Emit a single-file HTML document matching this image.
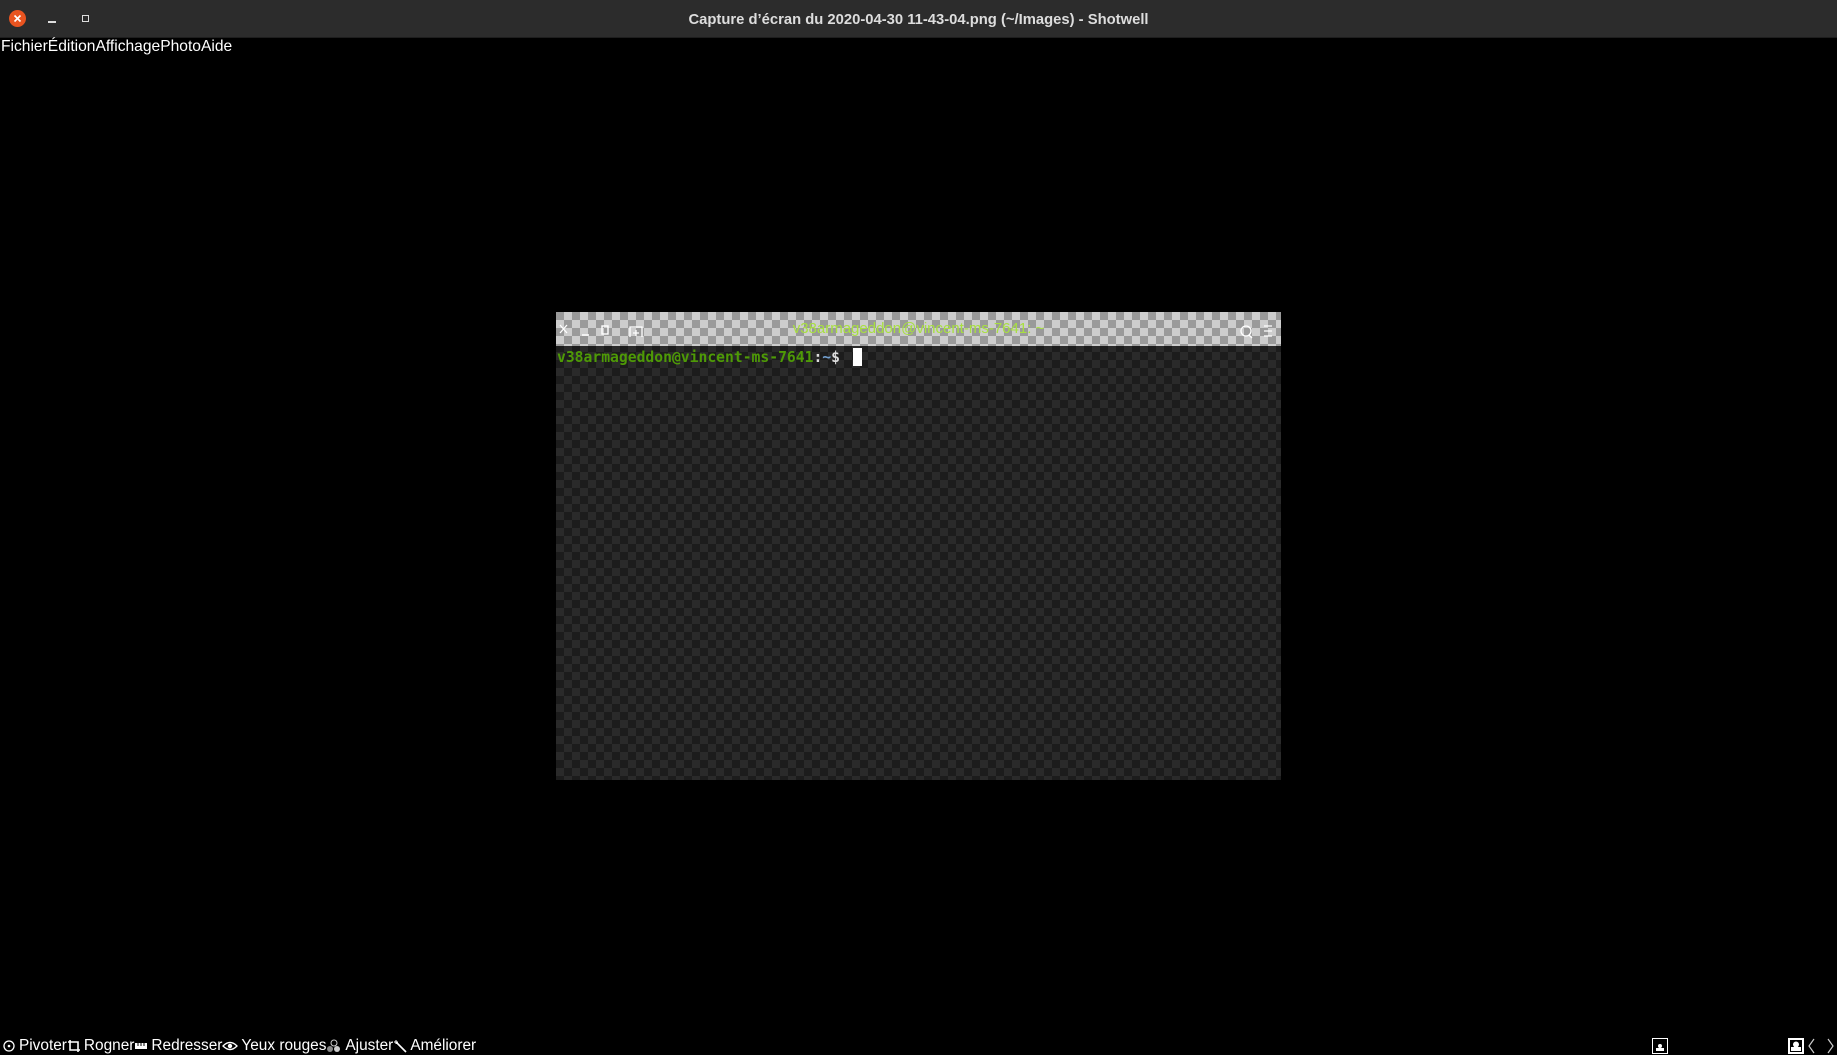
<!DOCTYPE html>
<html><head><meta charset="utf-8"><style>
html,body{margin:0;padding:0;width:1837px;height:1055px;background:#000;overflow:hidden;font-family:"Liberation Sans",sans-serif;}
.tb{position:absolute;left:0;top:0;width:1837px;height:37px;background:#2c2c2c;border-bottom:1px solid #1e1e1e}
.close{position:absolute;left:9px;top:10px;width:17px;height:17px;border-radius:50%;background:#e95420}
.title{position:absolute;left:0;right:0;top:12px;text-align:center;color:#ddd;font-weight:bold;font-size:14.8px}
.menu{position:absolute;left:1px;top:38px;color:#fff;font-size:15.6px}
.term{position:absolute;left:556px;top:312px;width:725px;height:468px;
background-color:#1c1c1c;background-image:
linear-gradient(45deg,#2a2a2a 25%,transparent 25%,transparent 75%,#2a2a2a 75%),
linear-gradient(45deg,#2a2a2a 25%,transparent 25%,transparent 75%,#2a2a2a 75%);
background-size:16px 16px;background-position:0 0,8px 8px}
.th{position:absolute;left:0;top:0;width:725px;height:34px;background-color:#9a9a9a;background-image:
linear-gradient(45deg,#cdcdcd 25%,transparent 25%,transparent 75%,#cdcdcd 75%),
linear-gradient(45deg,#cdcdcd 25%,transparent 25%,transparent 75%,#cdcdcd 75%);
background-size:16px 16px;background-position:0 0,8px 8px}
.tt{position:absolute;left:0;right:0;top:8px;text-align:center;color:#a8e040;font-family:"Liberation Sans",sans-serif;font-size:15px}
.pr{position:absolute;left:1px;top:36px;font-family:"DejaVu Sans Mono","Liberation Mono",monospace;font-weight:bold;font-size:14.7px;color:#4e9a06;white-space:pre}
.cur{display:inline-block;width:9px;height:18px;background:#fff;vertical-align:-4px;margin-left:4px}
.bot{position:absolute;left:2px;top:1037px;color:#fff;font-size:15.4px;white-space:pre;display:flex;align-items:center}
.bot svg{margin-right:3px}
</style></head><body>
<div class="tb">
<div class="close"><svg width="17" height="17"><path d="M5.5 5.5L11.5 11.5M11.5 5.5L5.5 11.5" stroke="#fff" stroke-width="1.6"/></svg></div>
<div style="position:absolute;left:48px;top:21px;width:8px;height:1.5px;background:#ddd"></div>
<div style="position:absolute;left:82px;top:15px;width:5px;height:5px;border:1.3px solid #ddd"></div>
<div class="title">Capture d’écran du 2020-04-30 11-43-04.png (~/Images) - Shotwell</div>
</div>
<div class="menu">FichierÉditionAffichagePhotoAide</div>
<div class="term">
<div class="th">
<svg width="725" height="34" style="position:absolute;left:0;top:0">
<path d="M4 13l7 8M11 13l-7 8" stroke="#fff" stroke-width="1.3"/>
<path d="M26 23h7" stroke="#fff" stroke-width="1.5"/>
<rect x="46" y="14" width="6" height="8" fill="none" stroke="#fff" stroke-width="1.4"/>
<path d="M74 25v-10h12v10M77 21h6M80 18v6" fill="none" stroke="#fff" stroke-width="1.3"/>
<circle cx="690" cy="19" r="5" fill="none" stroke="#fff" stroke-width="1.3"/><path d="M693 23l3 3" stroke="#fff" stroke-width="1.3"/>
<path d="M708 14h8M708 19h8M708 24h8" stroke="#fff" stroke-width="1.3"/>
</svg>
<div class="tt">v38armageddon@vincent-ms-7641: ~</div>
</div>
<div class="pr">v38armageddon@vincent-ms-7641<span style="color:#ddd">:</span><span style="color:#729fcf">~</span><span style="color:#ddd">$ </span><span class="cur"></span></div>
</div>
<div class="bot">
<svg width="14" height="14"><circle cx="7" cy="7" r="5" fill="none" stroke="#fff" stroke-width="1.3"/><circle cx="7" cy="7" r="1.3" fill="#fff"/></svg><span>Pivoter</span>
<svg width="14" height="14"><path d="M3 1v10h10M1 3h10v10" fill="none" stroke="#fff" stroke-width="1.6"/></svg><span>Rogner</span>
<svg width="14" height="14"><rect x="1" y="4" width="12" height="6" fill="#fff"/><path d="M4 4v3M7 4v3M10 4v3" stroke="#000"/></svg><span>Redresser</span>
<svg width="16" height="14"><path d="M1 7Q8 0 15 7Q8 14 1 7z" fill="none" stroke="#fff" stroke-width="1.3"/><circle cx="8" cy="7" r="2.2" fill="#fff"/></svg><span>Yeux rouges</span>
<svg width="16" height="14"><circle cx="8" cy="4" r="3" fill="none" stroke="#ccc"/><circle cx="4" cy="10" r="3" fill="#888"/><circle cx="11" cy="10" r="3" fill="#ccc"/></svg><span>Ajuster</span>
<svg width="14" height="14"><path d="M3 3l10 10" stroke="#fff" stroke-width="1.6"/><path d="M1 3h4M3 1v4" stroke="#fff"/></svg><span>Améliorer</span>
</div>
<svg width="16" height="16" style="position:absolute;left:1652px;top:1038px"><rect x="0.5" y="0.5" width="15" height="15" fill="#000" stroke="#fff"/><circle cx="8" cy="8" r="2" fill="#fff"/><rect x="4" y="10" width="8" height="3" fill="#fff"/></svg>
<svg width="16" height="16" style="position:absolute;left:1788px;top:1038px"><rect x="0" y="0" width="16" height="16" fill="#fff"/><rect x="2" y="2" width="12" height="12" fill="#000"/><circle cx="8" cy="6.5" r="3" fill="#fff"/><rect x="3" y="9" width="10" height="4" fill="#fff"/></svg>
<svg width="40" height="16" style="position:absolute;left:1806px;top:1038px"><path d="M8 1L3 8L8 15M22 1L27 8L22 15" fill="none" stroke="#ccc" stroke-width="1.2"/></svg>
</body></html>
